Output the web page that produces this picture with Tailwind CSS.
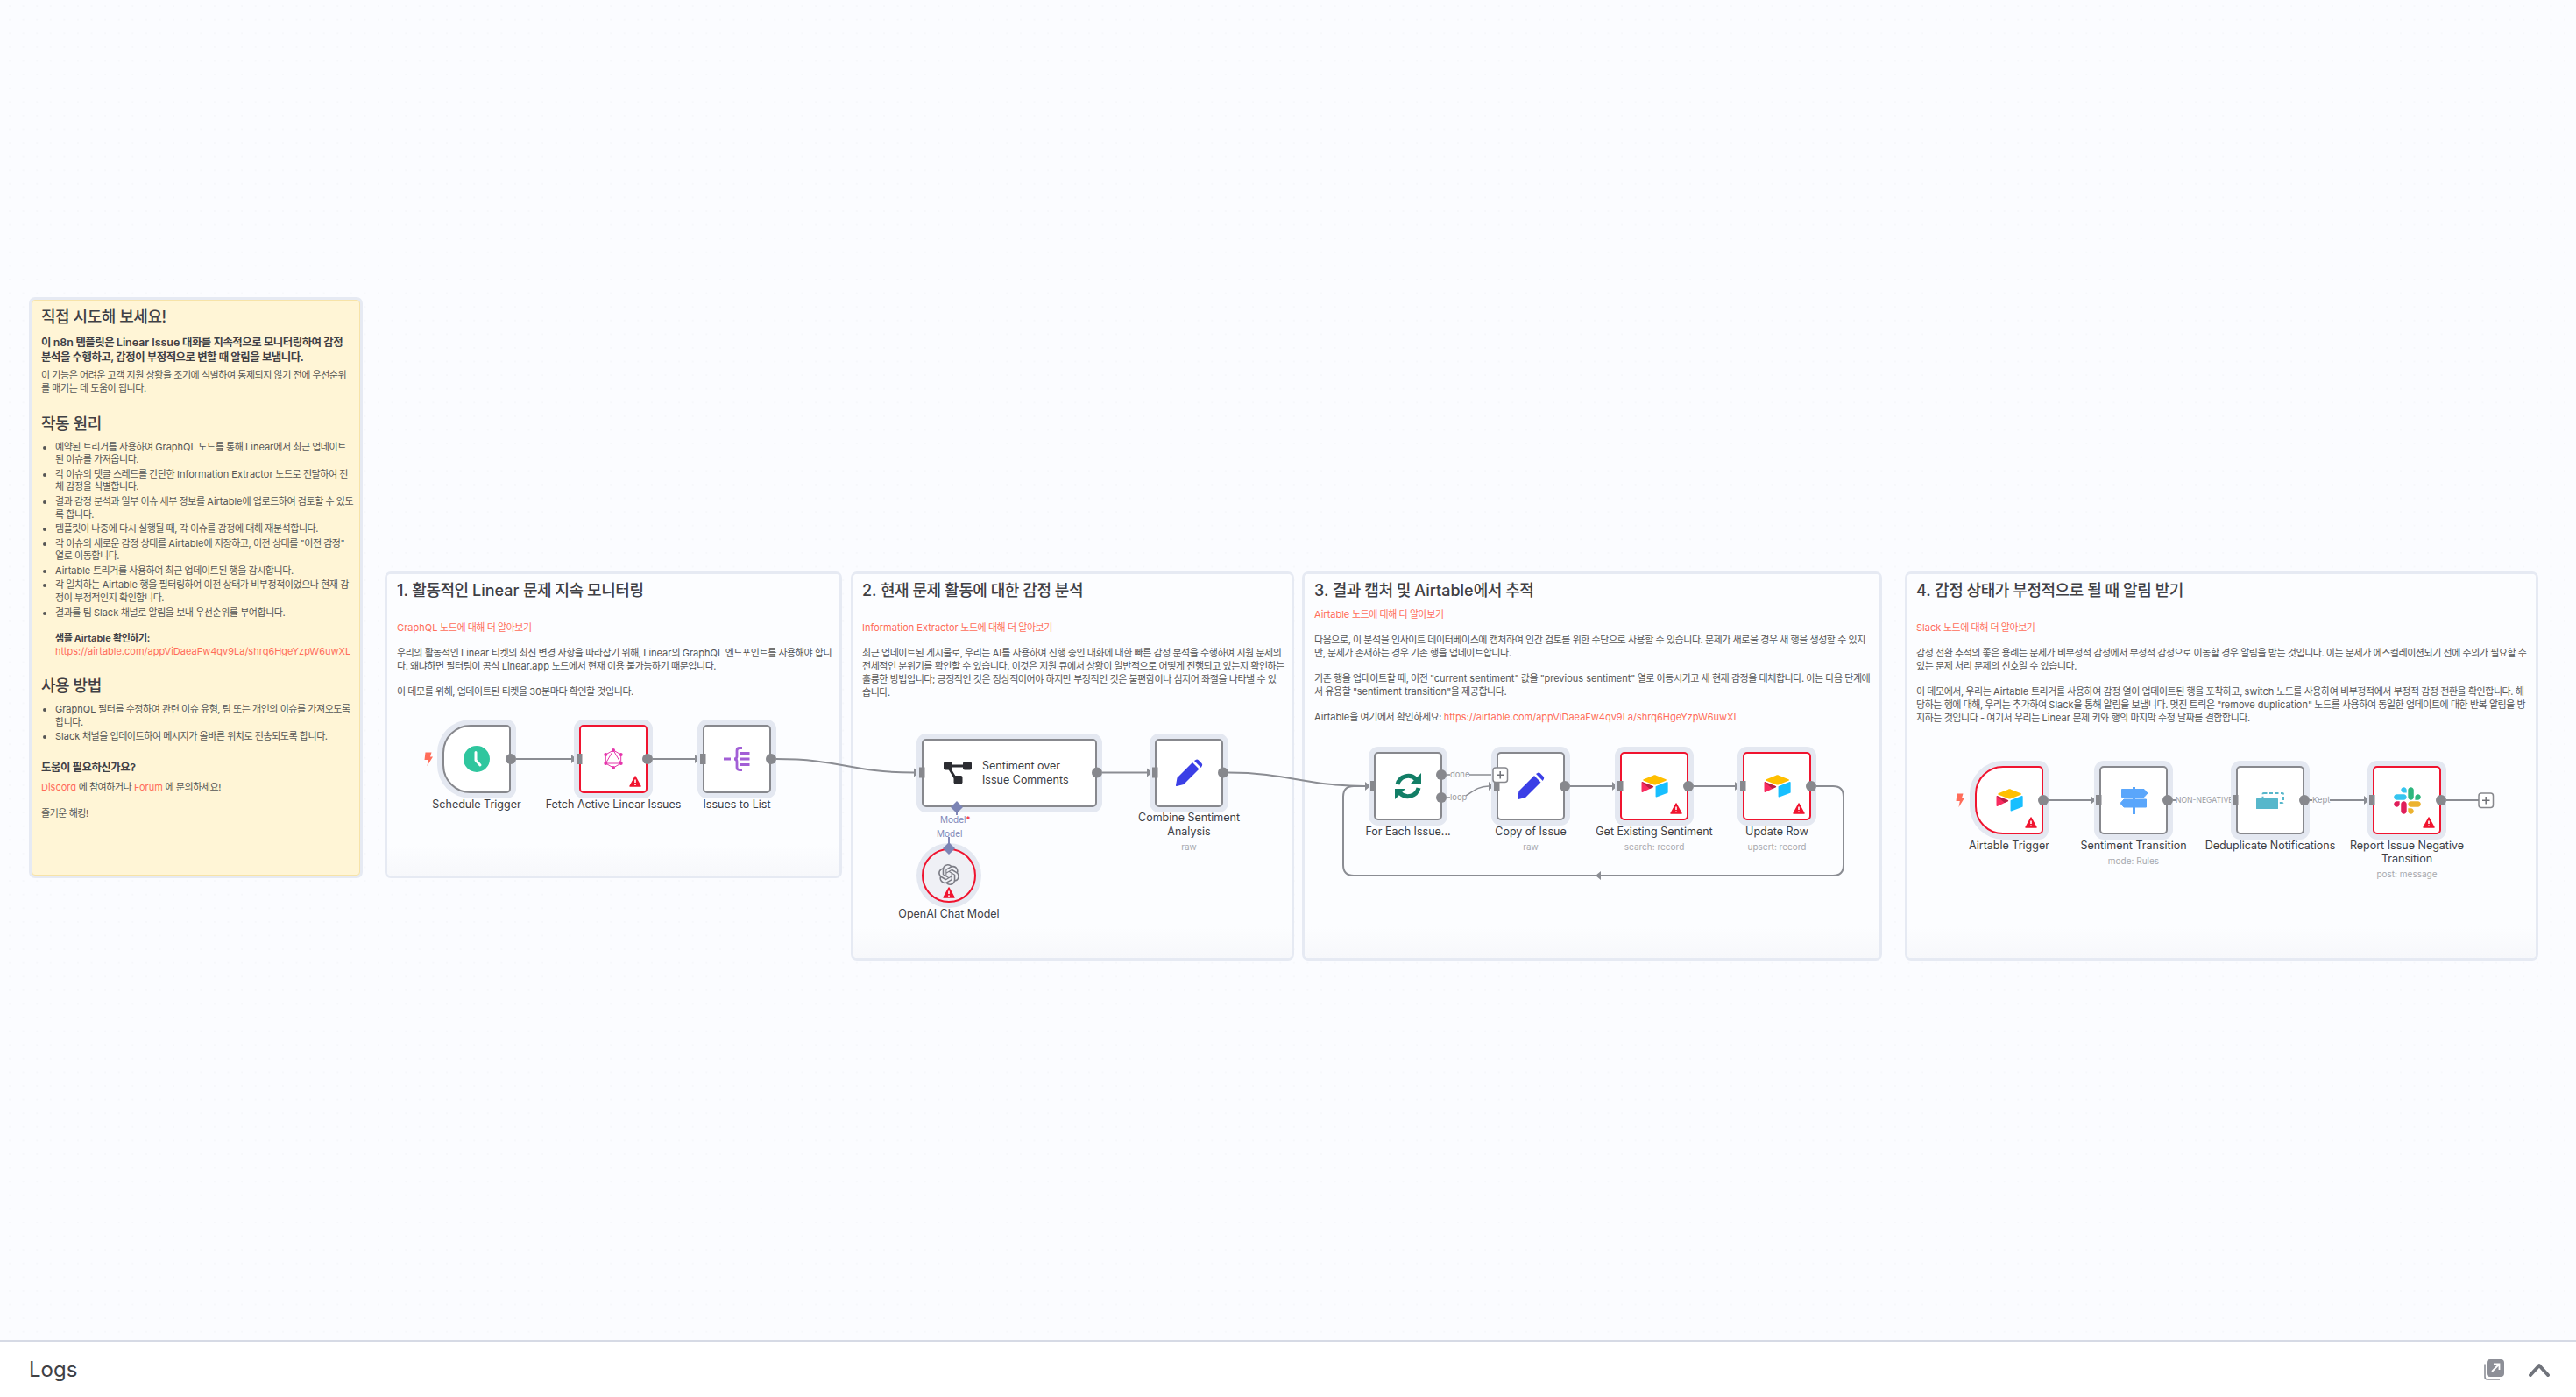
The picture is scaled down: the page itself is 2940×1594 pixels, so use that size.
<!DOCTYPE html>
<html lang="ko">
<head>
<meta charset="utf-8">
<title>Workflow</title>
<script src="https://cdn.jsdelivr.net/npm/@tailwindcss/browser@4"></script>
</head>
<body class="bg-white">
<div class="flex flex-col h-[1594px] w-[2940px] overflow-hidden font-['Inter','Noto_Sans_CJK_KR',sans-serif]">
  <main class="relative h-[1529px] overflow-hidden bg-[#fbfcff] [background-image:radial-gradient(#d4d6dd_0.6px,transparent_0.7px)] [background-size:15.6px_15.6px] [background-position:3.2px_-0.7px]">

    <!-- sticky intro -->
    <section class="absolute left-[36px] top-[342px] w-[375px] h-[657px] rounded-[4px] bg-[#fff5d6] border border-[#f7e3a8] shadow-[0_0_0_3px_#e6eaf3] pl-[10px] pr-[8px] pt-[7px] text-[#555] text-[11px] leading-[14.7px] tracking-[-0.45px]">
      <h2 class="text-[18px] leading-[24px] font-medium text-[#3f4045]">직접 시도해 보세요!</h2>
      <p class="mt-[7.5px] text-[12.4px] leading-[17px] font-semibold text-[#3f4045]">이 <span class="tracking-normal">n8n</span> 템플릿은 <span class="tracking-normal">Linear Issue</span> 대화를 지속적으로 모니터링하여 감정 분석을 수행하고, 감정이 부정적으로 변할 때 알림을 보냅니다.</p>
      <p class="mt-[5.5px] leading-[15.4px]">이 기능은 어려운 고객 지원 상황을 조기에 식별하여 통제되지 않기 전에 우선순위를 매기는 데 도움이 됩니다.</p>
      <h2 class="mt-[19.7px] text-[18px] leading-[24px] font-medium text-[#3f4045]">작동 원리</h2>
      <ul class="mt-[7px] pl-[16px] list-disc flex flex-col gap-[1.8px]">
        <li>예약된 트리거를 사용하여 <span class="tracking-normal">GraphQL</span> 노드를 통해 <span class="tracking-normal">Linear</span>에서 최근 업데이트된 이슈를 가져옵니다.</li>
        <li>각 이슈의 댓글 스레드를 간단한 <span class="tracking-normal">Information Extractor</span> 노드로 전달하여 전체 감정을 식별합니다.</li>
        <li class="-mr-[4px]">결과 감정 분석과 일부 이슈 세부 정보를 <span class="tracking-normal">Airtable</span>에 업로드하여 검토할 수 있도록 합니다.</li>
        <li>템플릿이 나중에 다시 실행될 때, 각 이슈를 감정에 대해 재분석합니다.</li>
        <li>각 이슈의 새로운 감정 상태를 <span class="tracking-normal">Airtable</span>에 저장하고, 이전 상태를 "이전 감정" 열로 이동합니다.</li>
        <li><span class="tracking-normal">Airtable</span> 트리거를 사용하여 최근 업데이트된 행을 감시합니다.</li>
        <li>각 일치하는 <span class="tracking-normal">Airtable</span> 행을 필터링하여 이전 상태가 비부정적이었으나 현재 감정이 부정적인지 확인합니다.</li>
        <li>결과를 팀 <span class="tracking-normal">Slack</span> 채널로 알림을 보내 우선순위를 부여합니다.</li>
      </ul>
      <p class="mt-[14.3px] pl-[16px] leading-[15px]"><strong class="font-semibold text-[#3f4045]">샘플 <span class="tracking-normal">Airtable</span> 확인하기:</strong><br><a class="text-[#ff6d5a] tracking-normal">https://airtable.com/appViDaeaFw4qv9La/shrq6HgeYzpW6uwXL</a></p>
      <h2 class="mt-[20.1px] text-[18px] leading-[24px] font-medium text-[#3f4045]">사용 방법</h2>
      <ul class="mt-[7.6px] pl-[16px] list-disc flex flex-col gap-[1.8px]">
        <li><span class="tracking-normal">GraphQL</span> 필터를 수정하여 관련 이슈 유형, 팀 또는 개인의 이슈를 가져오도록 합니다.</li>
        <li><span class="tracking-normal">Slack</span> 채널을 업데이트하여 메시지가 올바른 위치로 전송되도록 합니다.</li>
      </ul>
      <h3 class="mt-[19px] text-[12.4px] leading-[17px] font-semibold text-[#3f4045]">도움이 필요하신가요?</h3>
      <p class="mt-[7px]"><a class="text-[#ff6d5a] tracking-normal">Discord</a> 에 참여하거나 <a class="text-[#ff6d5a] tracking-normal">Forum</a> 에 문의하세요!</p>
      <p class="mt-[14.7px]">즐거운 해킹!</p>
    </section>

    <!-- section 1 -->
    <section class="absolute left-[442px] top-[655px] w-[516px] h-[344px] rounded-[4px] bg-linear-to-b from-[#fcfdff] from-[90%] to-[#f7f8fb] shadow-[0_0_0_3px_#e6eaf3] pl-[11px] pr-[8px] text-[#555] text-[11px] leading-[14.8px] tracking-[-0.45px]">
      <h2 class="pt-[7px] text-[18px] leading-[24px] font-medium text-[#3f4045]"><span class="tracking-normal">1.</span> 활동적인 <span class="tracking-normal">Linear</span> 문제 지속 모니터링</h2>
      <p class="mt-[23px] text-[#ff6d5a]"><span class="tracking-normal">GraphQL</span> 노드에 대해 더 알아보기</p>
      <p class="mt-[14.4px]">우리의 활동적인 <span class="tracking-normal">Linear</span> 티켓의 최신 변경 사항을 따라잡기 위해, <span class="tracking-normal">Linear</span>의 <span class="tracking-normal">GraphQL</span> 엔드포인트를 사용해야 합니다. 왜냐하면 필터링이 공식 <span class="tracking-normal">Linear.app</span> 노드에서 현재 이용 불가능하기 때문입니다.</p>
      <p class="mt-[14.4px]">이 데모를 위해, 업데이트된 티켓을 <span class="tracking-normal">30</span>분마다 확인할 것입니다.</p>
    </section>

    <!-- section 2 -->
    <section class="absolute left-[974px] top-[655px] w-[500px] h-[438px] rounded-[4px] bg-linear-to-b from-[#fcfdff] from-[92%] to-[#f7f8fb] shadow-[0_0_0_3px_#e6eaf3] pl-[10px] pr-[8px] text-[#555] text-[11px] leading-[14.8px] tracking-[-0.45px]">
      <h2 class="pt-[7px] text-[18px] leading-[24px] font-medium text-[#3f4045]"><span class="tracking-normal">2.</span> 현재 문제 활동에 대한 감정 분석</h2>
      <p class="mt-[23px] text-[#ff6d5a]"><span class="tracking-normal">Information Extractor</span> 노드에 대해 더 알아보기</p>
      <p class="mt-[14.4px]">최근 업데이트된 게시물로, 우리는 <span class="tracking-normal">AI</span>를 사용하여 진행 중인 대화에 대한 빠른 감정 분석을 수행하여 지원 문제의 전체적인 분위기를 확인할 수 있습니다. 이것은 지원 큐에서 상황이 일반적으로 어떻게 진행되고 있는지 확인하는 훌륭한 방법입니다; 긍정적인 것은 정상적이어야 하지만 부정적인 것은 불편함이나 심지어 좌절을 나타낼 수 있습니다.</p>
    </section>

    <!-- section 3 -->
    <section class="absolute left-[1489px] top-[655px] w-[656px] h-[438px] rounded-[4px] bg-linear-to-b from-[#fcfdff] from-[92%] to-[#f7f8fb] shadow-[0_0_0_3px_#e6eaf3] pl-[11px] pr-[8px] text-[#555] text-[11px] leading-[14.8px] tracking-[-0.45px]">
      <h2 class="pt-[7px] text-[18px] leading-[24px] font-medium text-[#3f4045]"><span class="tracking-normal">3.</span> 결과 캡처 및 <span class="tracking-normal">Airtable</span>에서 추적</h2>
      <p class="mt-[8px] text-[#ff6d5a]"><span class="tracking-normal">Airtable</span> 노드에 대해 더 알아보기</p>
      <p class="mt-[14.4px]">다음으로, 이 분석을 인사이트 데이터베이스에 캡처하여 인간 검토를 위한 수단으로 사용할 수 있습니다. 문제가 새로울 경우 새 행을 생성할 수 있지만, 문제가 존재하는 경우 기존 행을 업데이트합니다.</p>
      <p class="mt-[14.4px]">기존 행을 업데이트할 때, 이전 "<span class="tracking-normal">current sentiment</span>" 값을 "<span class="tracking-normal">previous sentiment</span>" 열로 이동시키고 새 현재 감정을 대체합니다. 이는 다음 단계에서 유용할 "<span class="tracking-normal">sentiment transition</span>"을 제공합니다.</p>
      <p class="mt-[14.4px]"><span class="tracking-normal">Airtable</span>을 여기에서 확인하세요: <a class="text-[#ff6d5a] tracking-normal">https://airtable.com/appViDaeaFw4qv9La/shrq6HgeYzpW6uwXL</a></p>
    </section>

    <!-- section 4 -->
    <section class="absolute left-[2177px] top-[655px] w-[717px] h-[438px] rounded-[4px] bg-linear-to-b from-[#fcfdff] from-[92%] to-[#f7f8fb] shadow-[0_0_0_3px_#e6eaf3] pl-[10px] pr-[8px] text-[#555] text-[11px] leading-[14.8px] tracking-[-0.45px]">
      <h2 class="pt-[7px] text-[18px] leading-[24px] font-medium text-[#3f4045]"><span class="tracking-normal">4.</span> 감정 상태가 부정적으로 될 때 알림 받기</h2>
      <p class="mt-[23px] text-[#ff6d5a]"><span class="tracking-normal">Slack</span> 노드에 대해 더 알아보기</p>
      <p class="mt-[14.4px]">감정 전환 추적의 좋은 용례는 문제가 비부정적 감정에서 부정적 감정으로 이동할 경우 알림을 받는 것입니다. 이는 문제가 에스컬레이션되기 전에 주의가 필요할 수 있는 문제 처리 문제의 신호일 수 있습니다.</p>
      <p class="mt-[14.4px]">이 데모에서, 우리는 <span class="tracking-normal">Airtable</span> 트리거를 사용하여 감정 열이 업데이트된 행을 포착하고, <span class="tracking-normal">switch</span> 노드를 사용하여 비부정적에서 부정적 감정 전환을 확인합니다. 해당하는 행에 대해, 우리는 추가하여 <span class="tracking-normal">Slack</span>을 통해 알림을 보냅니다. 멋진 트릭은 "<span class="tracking-normal">remove duplication</span>" 노드를 사용하여 동일한 업데이트에 대한 반복 알림을 방지하는 것입니다 - 여기서 우리는 <span class="tracking-normal">Linear</span> 문제 키와 행의 마지막 수정 날짜를 결합합니다.</p>
    </section>

    <!-- edges under the nodes -->
    <svg class="absolute left-0 top-0" width="2940" height="1529" fill="none" stroke="#8b8d93" stroke-width="2">
      <path d="M589 866H653M745 866H794"/>
      <path d="M886 866C960 866 970 881.5 1043 881.5"/>
      <path d="M1258 881.5H1309M1402 881.5C1470 881.5 1490 897 1558 897"/>
      <path d="M1792 897H1840M1933 897H1980"/>
      <path d="M2073 897H2092Q2104 897 2104 909V987Q2104 999 2092 999H1545Q1533 999 1533 987V909Q1533 897 1545 897H1558"/>
      <path d="M1651 884H1655M1651 910H1655M1677 884H1704" stroke-width="1.5"/>
      <path d="M1673 908C1682 902 1688 897 1699 897" stroke-width="1.5"/>
      <path d="M2338 913H2386M2480 913H2483M2636 913H2639M2659 913H2698M2792 913H2829" />
      <path d="M1083 955V968M1092 926V930" stroke="#8288b8"/>
      <g fill="#8b8d93" stroke="none">
        <path d="M652 861V871L658 866ZM793 861V871L799 866ZM1043 876.5V886.5L1049 881.5ZM1309 876.5V886.5L1315 881.5ZM1558 892V902L1564 897ZM1699 892V902L1705 897ZM1840 892V902L1846 897ZM1980 892V902L1986 897ZM2386 908V918L2392 913ZM2698 908V918L2704 913ZM1827 994V1004L1821 999Z"/>
      </g>
    </svg>

    <span class="absolute left-[2483px] top-[906px] whitespace-nowrap text-[8.6px] leading-[14px] text-[#9a9ba0]">NON-NEGATIVE</span>

    <!-- trigger bolts -->
    <svg class="absolute left-[484px] top-[858px]" width="10" height="16" viewBox="0 0 10 16"><path d="M1.5 0.5H8.5L7 5.5H10L3.5 16L4.8 9H0.5Z" fill="#ff6d5a"/></svg>
    <svg class="absolute left-[2232px] top-[905px]" width="10" height="16" viewBox="0 0 10 16"><path d="M1.5 0.5H8.5L7 5.5H10L3.5 16L4.8 9H0.5Z" fill="#ff6d5a"/></svg>

    <!-- Schedule Trigger -->
    <div class="absolute left-[505px] top-[827px] w-[78px] h-[78px] flex items-center justify-center bg-white border-2 border-[#87888d] rounded-l-[32px] rounded-r-[5px] shadow-[0_0_0_6px_#e4e8f1]">
      <svg width="30" height="30" viewBox="0 0 30 30"><circle cx="15" cy="15" r="15" fill="#2fc69e"/><path d="M14 7.5V16.5L19 22" fill="none" stroke="#fff" stroke-width="3" stroke-linecap="round" stroke-linejoin="round"/></svg>
      <span class="absolute top-[calc(100%+7px)] left-1/2 -translate-x-1/2 w-[170px] text-center text-[12.5px] leading-[15px] text-[#3d3e44]">Schedule Trigger</span>
    </div>

    <!-- Fetch Active Linear Issues -->
    <div class="absolute left-[661px] top-[827px] w-[78px] h-[78px] flex items-center justify-center bg-white border-2 border-[#f0142f] rounded-[5px] shadow-[0_0_0_6px_#e4e8f1]">
      <svg width="24" height="24" viewBox="0 0 24 24" fill="none" stroke="#e535ab" stroke-width="1"><path d="M12 2L20.7 7V17L12 22L3.3 17V7ZM12 2L20.7 17H3.3Z"/><g fill="#e535ab" stroke="none"><circle cx="12" cy="2" r="2"/><circle cx="20.7" cy="7" r="2"/><circle cx="20.7" cy="17" r="2"/><circle cx="12" cy="22" r="2"/><circle cx="3.3" cy="17" r="2"/><circle cx="3.3" cy="7" r="2"/></g></svg>
      <svg class="absolute right-[5px] bottom-[5px]" width="14" height="13" viewBox="0 0 14 13"><path d="M7 1L13 12H1Z" fill="#f0142f" stroke="#f0142f" stroke-width="1.5" stroke-linejoin="round"/><path d="M7 4.5V8M7 9.5V11" stroke="#fff" stroke-width="1.6"/></svg>
      <span class="absolute top-[calc(100%+7px)] left-1/2 -translate-x-1/2 w-[190px] text-center text-[12.5px] leading-[15px] text-[#3d3e44]">Fetch Active Linear Issues</span>
    </div>

    <!-- Issues to List -->
    <div class="absolute left-[802px] top-[827px] w-[78px] h-[78px] flex items-center justify-center bg-white border-2 border-[#87888d] rounded-[5px] shadow-[0_0_0_6px_#e4e8f1]">
      <svg width="30" height="28" viewBox="0 0 30 28" fill="none" stroke="#a25fd6" stroke-width="2.8"><path d="M0 14H8M21 1.5H18Q15 1.5 15 4.5V11Q15 14 12 14Q15 14 15 17V23.5Q15 26.5 18 26.5H21M19 7.5H29.5M19 14H29.5M19 20.5H29.5"/></svg>
      <span class="absolute top-[calc(100%+7px)] left-1/2 -translate-x-1/2 w-[170px] text-center text-[12.5px] leading-[15px] text-[#3d3e44]">Issues to List</span>
    </div>

    <!-- Sentiment over Issue Comments -->
    <div class="absolute left-[1052px] top-[843px] w-[200px] h-[78px] flex items-center gap-[12px] pl-[23px] bg-white border-2 border-[#87888d] rounded-[5px] shadow-[0_0_0_6px_#e4e8f1]">
      <svg class="shrink-0" width="32" height="26" viewBox="0 0 32 26"><path d="M9 5H23M6 7L14 20" stroke="#2b2c31" stroke-width="3"/><rect x="0" y="0" width="10" height="9.5" rx="2" fill="#2b2c31"/><rect x="22" y="0" width="10" height="9.5" rx="2" fill="#2b2c31"/><rect x="11.5" y="16" width="10" height="9.5" rx="2" fill="#2b2c31"/></svg>
      <span class="text-[12.5px] leading-[16px] text-[#3d3e44]">Sentiment over<br>Issue Comments</span>
    </div>

    <!-- Combine Sentiment Analysis -->
    <div class="absolute left-[1318px] top-[843px] w-[78px] h-[78px] flex items-center justify-center bg-white border-2 border-[#87888d] rounded-[5px] shadow-[0_0_0_6px_#e4e8f1]">
      <svg width="32" height="32" viewBox="0 0 32 32" fill="#3b3fe6"><path d="M2.5 21.5L20 4L27.5 11.5L10 29L2 31Q0.8 31.3 1 30Z"/><path d="M22 2L24.2 0.8Q25.6 0.2 26.8 1.2L30.5 5Q31.6 6.2 31 7.6L29.8 10Z"/></svg>
      <div class="absolute top-[calc(100%+6px)] left-1/2 -translate-x-1/2 w-[170px] text-center">
        <p class="text-[12.5px] leading-[15.5px] text-[#3d3e44]">Combine Sentiment<br>Analysis</p>
        <p class="mt-[3px] text-[10px] leading-[14px] text-[#a8a9ae]">raw</p>
      </div>
    </div>

    <!-- OpenAI Chat Model -->
    <div class="absolute left-[1052px] top-[968px] w-[62px] h-[62px] flex items-center justify-center bg-[#eff0f5] border-2 border-[#f0142f] rounded-full shadow-[0_0_0_6px_#e4e8f1]">
      <svg class="-mt-[3px]" width="24" height="24" viewBox="0 0 24 24" fill="#7b7c85"><path d="M22.2819 9.8211a5.9847 5.9847 0 0 0-.5157-4.9108 6.0462 6.0462 0 0 0-6.5098-2.9A6.0651 6.0651 0 0 0 4.9807 4.1818a5.9847 5.9847 0 0 0-3.9977 2.9 6.0462 6.0462 0 0 0 .7427 7.0966 5.98 5.98 0 0 0 .511 4.9107 6.051 6.051 0 0 0 6.5146 2.9001A5.9847 5.9847 0 0 0 13.2599 24a6.0557 6.0557 0 0 0 5.7718-4.2058 5.9894 5.9894 0 0 0 3.9977-2.9001 6.0557 6.0557 0 0 0-.7475-7.0729zm-9.022 12.6081a4.4755 4.4755 0 0 1-2.8764-1.0408l.1419-.0804 4.7783-2.7582a.7948.7948 0 0 0 .3927-.6813v-6.7369l2.02 1.1686a.071.071 0 0 1 .038.052v5.5826a4.504 4.504 0 0 1-4.4945 4.4944zm-9.6607-4.1254a4.4708 4.4708 0 0 1-.5346-3.0137l.142.0852 4.783 2.7582a.7712.7712 0 0 0 .7806 0l5.8428-3.3685v2.3324a.0804.0804 0 0 1-.0332.0615L9.74 19.9502a4.4992 4.4992 0 0 1-6.1408-1.6464zM2.3408 7.8956a4.485 4.485 0 0 1 2.3655-1.9728V11.6a.7664.7664 0 0 0 .3879.6765l5.8144 3.3543-2.0201 1.1685a.0757.0757 0 0 1-.071 0l-4.8303-2.7865A4.504 4.504 0 0 1 2.3408 7.872zm16.5963 3.8558L13.1038 8.364 15.1192 7.2a.0757.0757 0 0 1 .071 0l4.8303 2.7913a4.4944 4.4944 0 0 1-.6765 8.1042v-5.6772a.79.79 0 0 0-.407-.667zm2.0107-3.0231l-.142-.0852-4.7735-2.7818a.7759.7759 0 0 0-.7854 0L9.409 9.2297V6.8974a.0662.0662 0 0 1 .0284-.0615l4.8303-2.7866a4.4992 4.4992 0 0 1 6.6802 4.66zM8.3065 12.863l-2.02-1.1638a.0804.0804 0 0 1-.038-.0567V6.0742a4.4992 4.4992 0 0 1 7.3757-3.4537l-.142.0805L8.704 5.459a.7948.7948 0 0 0-.3927.6813zm1.0976-2.3654l2.602-1.4998 2.6069 1.4998v2.9994l-2.5974 1.4997-2.6067-1.4997Z"/></svg>
      <svg class="absolute left-[22px] bottom-[3px]" width="14" height="13" viewBox="0 0 14 13"><path d="M7 1L13 12H1Z" fill="#f0142f" stroke="#f0142f" stroke-width="1.5" stroke-linejoin="round"/><path d="M7 4.5V8M7 9.5V11" stroke="#fff" stroke-width="1.6"/></svg>
      <span class="absolute top-[calc(100%+7px)] left-1/2 -translate-x-1/2 w-[170px] text-center text-[12.5px] leading-[15px] text-[#3d3e44]">OpenAI Chat Model</span>
    </div>

    <!-- For Each Issue -->
    <div class="absolute left-[1568px] top-[858px] w-[78px] h-[78px] flex items-center justify-center bg-white border-2 border-[#87888d] rounded-[5px] shadow-[0_0_0_6px_#e4e8f1]">
      <svg width="32" height="32" viewBox="0 0 32 32" fill="none" stroke="#127e66" stroke-width="5"><path d="M4 14A12.5 12.5 0 0 1 25 8"/><path d="M28 18A12.5 12.5 0 0 1 7 24"/><path d="M31 1V13H19ZM1 31V19H13Z" fill="#127e66" stroke="none"/></svg>
      <span class="absolute top-[calc(100%+7px)] left-1/2 -translate-x-1/2 w-[170px] text-center text-[12.5px] leading-[15px] text-[#3d3e44]">For Each Issue...</span>
    </div>

    <!-- Copy of Issue -->
    <div class="absolute left-[1708px] top-[858px] w-[78px] h-[78px] flex items-center justify-center bg-white border-2 border-[#87888d] rounded-[5px] shadow-[0_0_0_6px_#e4e8f1]">
      <svg width="32" height="32" viewBox="0 0 32 32" fill="#3b3fe6"><path d="M2.5 21.5L20 4L27.5 11.5L10 29L2 31Q0.8 31.3 1 30Z"/><path d="M22 2L24.2 0.8Q25.6 0.2 26.8 1.2L30.5 5Q31.6 6.2 31 7.6L29.8 10Z"/></svg>
      <div class="absolute top-[calc(100%+7px)] left-1/2 -translate-x-1/2 w-[170px] text-center">
        <p class="text-[12.5px] leading-[15px] text-[#3d3e44]">Copy of Issue</p>
        <p class="mt-[3px] text-[10px] leading-[14px] text-[#a8a9ae]">raw</p>
      </div>
    </div>

    <!-- Get Existing Sentiment -->
    <div class="absolute left-[1849px] top-[858px] w-[78px] h-[78px] flex items-center justify-center bg-white border-2 border-[#f0142f] rounded-[5px] shadow-[0_0_0_6px_#e4e8f1]">
      <svg width="31" height="26" viewBox="0 0 200 170"><path fill="#FFBF00" d="M90 4.5L16.6 34.9c-4.1 1.7-4 7.5.1 9.2l73.8 29.3c6.5 2.6 13.7 2.6 20.2 0l73.8-29.3c4.1-1.6 4.2-7.4.1-9.2L111 4.5c-6.7-2.8-14.3-2.8-21 0z"/><path fill="#18BFFF" d="M107 89.3v73.1c0 3.5 3.5 5.9 6.8 4.6l82.2-32c1.9-.7 3.1-2.6 3.1-4.6V57.4c0-3.5-3.5-5.9-6.8-4.6l-82.2 32c-1.9.7-3.1 2.5-3.1 4.5z"/><path fill="#F82B60" d="M87.8 93.1l-24.4 11.8-2.5 1.2L9.4 130.8c-3.3 1.6-7.4-.8-7.4-4.4V57.8c0-1.3.7-2.4 1.6-3.3.4-.4.8-.7 1.2-.9 1.2-.7 3-.9 4.4-.3L88 84.4c4.1 1.6 4.4 7 .3 8.7z"/><path fill="#BA1E45" d="M87.8 93.1l-24.6 11.9L3.6 54.5c.4-.4.8-.7 1.2-.9 1.2-.7 3-.9 4.4-.3L88 84.4c4.1 1.6 4.4 7-.2 8.7z"/></svg>
      <svg class="absolute right-[5px] bottom-[5px]" width="14" height="13" viewBox="0 0 14 13"><path d="M7 1L13 12H1Z" fill="#f0142f" stroke="#f0142f" stroke-width="1.5" stroke-linejoin="round"/><path d="M7 4.5V8M7 9.5V11" stroke="#fff" stroke-width="1.6"/></svg>
      <div class="absolute top-[calc(100%+7px)] left-1/2 -translate-x-1/2 w-[170px] text-center">
        <p class="text-[12.5px] leading-[15px] text-[#3d3e44]">Get Existing Sentiment</p>
        <p class="mt-[3px] text-[10px] leading-[14px] text-[#a8a9ae]">search: record</p>
      </div>
    </div>

    <!-- Update Row -->
    <div class="absolute left-[1989px] top-[858px] w-[78px] h-[78px] flex items-center justify-center bg-white border-2 border-[#f0142f] rounded-[5px] shadow-[0_0_0_6px_#e4e8f1]">
      <svg width="31" height="26" viewBox="0 0 200 170"><path fill="#FFBF00" d="M90 4.5L16.6 34.9c-4.1 1.7-4 7.5.1 9.2l73.8 29.3c6.5 2.6 13.7 2.6 20.2 0l73.8-29.3c4.1-1.6 4.2-7.4.1-9.2L111 4.5c-6.7-2.8-14.3-2.8-21 0z"/><path fill="#18BFFF" d="M107 89.3v73.1c0 3.5 3.5 5.9 6.8 4.6l82.2-32c1.9-.7 3.1-2.6 3.1-4.6V57.4c0-3.5-3.5-5.9-6.8-4.6l-82.2 32c-1.9.7-3.1 2.5-3.1 4.5z"/><path fill="#F82B60" d="M87.8 93.1l-24.4 11.8-2.5 1.2L9.4 130.8c-3.3 1.6-7.4-.8-7.4-4.4V57.8c0-1.3.7-2.4 1.6-3.3.4-.4.8-.7 1.2-.9 1.2-.7 3-.9 4.4-.3L88 84.4c4.1 1.6 4.4 7 .3 8.7z"/><path fill="#BA1E45" d="M87.8 93.1l-24.6 11.9L3.6 54.5c.4-.4.8-.7 1.2-.9 1.2-.7 3-.9 4.4-.3L88 84.4c4.1 1.6 4.4 7-.2 8.7z"/></svg>
      <svg class="absolute right-[5px] bottom-[5px]" width="14" height="13" viewBox="0 0 14 13"><path d="M7 1L13 12H1Z" fill="#f0142f" stroke="#f0142f" stroke-width="1.5" stroke-linejoin="round"/><path d="M7 4.5V8M7 9.5V11" stroke="#fff" stroke-width="1.6"/></svg>
      <div class="absolute top-[calc(100%+7px)] left-1/2 -translate-x-1/2 w-[170px] text-center">
        <p class="text-[12.5px] leading-[15px] text-[#3d3e44]">Update Row</p>
        <p class="mt-[3px] text-[10px] leading-[14px] text-[#a8a9ae]">upsert: record</p>
      </div>
    </div>

    <!-- Airtable Trigger -->
    <div class="absolute left-[2254px] top-[874px] w-[78px] h-[78px] flex items-center justify-center bg-white border-2 border-[#f0142f] rounded-l-[32px] rounded-r-[5px] shadow-[0_0_0_6px_#e4e8f1]">
      <svg width="31" height="26" viewBox="0 0 200 170"><path fill="#FFBF00" d="M90 4.5L16.6 34.9c-4.1 1.7-4 7.5.1 9.2l73.8 29.3c6.5 2.6 13.7 2.6 20.2 0l73.8-29.3c4.1-1.6 4.2-7.4.1-9.2L111 4.5c-6.7-2.8-14.3-2.8-21 0z"/><path fill="#18BFFF" d="M107 89.3v73.1c0 3.5 3.5 5.9 6.8 4.6l82.2-32c1.9-.7 3.1-2.6 3.1-4.6V57.4c0-3.5-3.5-5.9-6.8-4.6l-82.2 32c-1.9.7-3.1 2.5-3.1 4.5z"/><path fill="#F82B60" d="M87.8 93.1l-24.4 11.8-2.5 1.2L9.4 130.8c-3.3 1.6-7.4-.8-7.4-4.4V57.8c0-1.3.7-2.4 1.6-3.3.4-.4.8-.7 1.2-.9 1.2-.7 3-.9 4.4-.3L88 84.4c4.1 1.6 4.4 7 .3 8.7z"/><path fill="#BA1E45" d="M87.8 93.1l-24.6 11.9L3.6 54.5c.4-.4.8-.7 1.2-.9 1.2-.7 3-.9 4.4-.3L88 84.4c4.1 1.6 4.4 7-.2 8.7z"/></svg>
      <svg class="absolute right-[5px] bottom-[5px]" width="14" height="13" viewBox="0 0 14 13"><path d="M7 1L13 12H1Z" fill="#f0142f" stroke="#f0142f" stroke-width="1.5" stroke-linejoin="round"/><path d="M7 4.5V8M7 9.5V11" stroke="#fff" stroke-width="1.6"/></svg>
      <span class="absolute top-[calc(100%+7px)] left-1/2 -translate-x-1/2 w-[170px] text-center text-[12.5px] leading-[15px] text-[#3d3e44]">Airtable Trigger</span>
    </div>

    <!-- Sentiment Transition -->
    <div class="absolute left-[2396px] top-[874px] w-[78px] h-[78px] flex items-center justify-center bg-white border-2 border-[#87888d] rounded-[5px] shadow-[0_0_0_6px_#e4e8f1]">
      <svg width="31" height="31" viewBox="0 0 31 31" fill="#5aa6fb"><path d="M14 0H17V3H14ZM14 12H17V14H14ZM14 23H17V31H14Z"/><path d="M1.5 2.5H27L31 7L27 11.5H1.5Z" stroke="#5aa6fb" stroke-linejoin="round"/><path d="M29.5 14H4L0 18.5L4 23H29.5Z" stroke="#5aa6fb" stroke-linejoin="round"/></svg>
      <div class="absolute top-[calc(100%+7px)] left-1/2 -translate-x-1/2 w-[170px] text-center">
        <p class="text-[12.5px] leading-[15px] text-[#3d3e44]">Sentiment Transition</p>
        <p class="mt-[3px] text-[10px] leading-[14px] text-[#a8a9ae]">mode: Rules</p>
      </div>
    </div>

    <!-- Deduplicate Notifications -->
    <div class="absolute left-[2552px] top-[874px] w-[78px] h-[78px] flex items-center justify-center bg-white border-2 border-[#87888d] rounded-[5px] shadow-[0_0_0_6px_#e4e8f1]">
      <svg width="32" height="19" viewBox="0 0 32 19"><rect x="7.5" y="1" width="23.5" height="11" rx="1" fill="none" stroke="#57b7cb" stroke-width="2" stroke-dasharray="4 2.5"/><rect x="0" y="7" width="25" height="12" rx="0.5" fill="#57b7cb"/></svg>
      <span class="absolute top-[calc(100%+7px)] left-1/2 -translate-x-1/2 w-[170px] text-center text-[12.5px] leading-[15px] text-[#3d3e44]">Deduplicate Notifications</span>
    </div>

    <!-- Report Issue Negative Transition -->
    <div class="absolute left-[2708px] top-[874px] w-[78px] h-[78px] flex items-center justify-center bg-white border-2 border-[#f0142f] rounded-[5px] shadow-[0_0_0_6px_#e4e8f1]">
      <svg width="31" height="31" viewBox="0 0 127 127"><path d="M27.2 80c0 7.3-5.9 13.2-13.2 13.2C6.7 93.2.8 87.3.8 80c0-7.3 5.9-13.2 13.2-13.2h13.2V80zm6.6 0c0-7.3 5.9-13.2 13.2-13.2 7.3 0 13.2 5.9 13.2 13.2v33c0 7.3-5.9 13.2-13.2 13.2-7.3 0-13.2-5.9-13.2-13.2V80z" fill="#E01E5A"/><path d="M47 27c-7.3 0-13.2-5.9-13.2-13.2C33.8 6.5 39.7.6 47 .6c7.3 0 13.2 5.9 13.2 13.2V27H47zm0 6.7c7.3 0 13.2 5.9 13.2 13.2 0 7.3-5.9 13.2-13.2 13.2H13.9C6.6 60.1.7 54.2.7 46.9c0-7.3 5.9-13.2 13.2-13.2H47z" fill="#36C5F0"/><path d="M99.9 46.9c0-7.3 5.9-13.2 13.2-13.2 7.3 0 13.2 5.9 13.2 13.2 0 7.3-5.9 13.2-13.2 13.2H99.9V46.9zm-6.6 0c0 7.3-5.9 13.2-13.2 13.2-7.3 0-13.2-5.9-13.2-13.2V13.8C66.9 6.5 72.8.6 80.1.6c7.3 0 13.2 5.9 13.2 13.2v33.1z" fill="#2EB67D"/><path d="M80.1 99.8c7.3 0 13.2 5.9 13.2 13.2 0 7.3-5.9 13.2-13.2 13.2-7.3 0-13.2-5.9-13.2-13.2V99.8h13.2zm0-6.6c-7.3 0-13.2-5.9-13.2-13.2 0-7.3 5.9-13.2 13.2-13.2h33.1c7.3 0 13.2 5.9 13.2 13.2 0 7.3-5.9 13.2-13.2 13.2H80.1z" fill="#ECB22E"/></svg>
      <svg class="absolute right-[5px] bottom-[5px]" width="14" height="13" viewBox="0 0 14 13"><path d="M7 1L13 12H1Z" fill="#f0142f" stroke="#f0142f" stroke-width="1.5" stroke-linejoin="round"/><path d="M7 4.5V8M7 9.5V11" stroke="#fff" stroke-width="1.6"/></svg>
      <div class="absolute top-[calc(100%+7px)] left-1/2 -translate-x-1/2 w-[170px] text-center">
        <p class="text-[12.5px] leading-[15px] text-[#3d3e44]">Report Issue Negative<br>Transition</p>
        <p class="mt-[3px] text-[10px] leading-[14px] text-[#a8a9ae]">post: message</p>
      </div>
    </div>

    <!-- ports and connector labels over the nodes -->
    <svg class="absolute left-0 top-0" width="2940" height="1529">
      <g fill="#87888d">
        <circle cx="583" cy="866" r="6"/><circle cx="739" cy="866" r="6"/><circle cx="880" cy="866" r="6"/>
        <circle cx="1252" cy="881.5" r="6"/><circle cx="1396" cy="881.5" r="6"/>
        <circle cx="1645" cy="884" r="6"/><circle cx="1645" cy="910" r="6"/><circle cx="1786" cy="897" r="6"/><circle cx="1927" cy="897" r="6"/><circle cx="2067" cy="897" r="6"/>
        <circle cx="2332" cy="913" r="6"/><circle cx="2474" cy="913" r="6"/><circle cx="2630" cy="913" r="6"/><circle cx="2786" cy="913" r="6"/>
        <rect x="658" y="860" width="6.5" height="12"/><rect x="799" y="860" width="6.5" height="12"/>
        <rect x="1049" y="875.5" width="6.5" height="12"/><rect x="1315" y="875.5" width="6.5" height="12"/>
        <rect x="1564" y="891" width="6.5" height="12"/><rect x="1705" y="891" width="6.5" height="12"/><rect x="1846" y="891" width="6.5" height="12"/><rect x="1986" y="891" width="6.5" height="12"/>
        <rect x="2392" y="907" width="6.5" height="12"/><rect x="2548" y="907" width="6.5" height="12"/><rect x="2704" y="907" width="6.5" height="12"/>
      </g>
      <path d="M1092 914L1099 921L1092 928L1085 921ZM1083 961L1090 968L1083 975L1076 968Z" fill="#7c84b4"/>
      <rect x="1704" y="876" width="16.5" height="16.5" rx="3" fill="#fff" stroke="#87888d" stroke-width="1.5"/>
      <path d="M1712.2 880V888.5M1708 884.2H1716.5" stroke="#6f7076" stroke-width="1.5"/>
      <rect x="2829" y="905" width="16.5" height="16.5" rx="3" fill="#fff" stroke="#87888d" stroke-width="1.5"/>
      <path d="M2837.2 909V917.5M2833 913.2H2841.5" stroke="#6f7076" stroke-width="1.5"/>
    </svg>

    <span class="absolute left-[1655px] top-[877px] text-[9.4px] leading-[14px] text-[#9a9ba0]">done</span>
    <span class="absolute left-[1655px] top-[903px] text-[9.4px] leading-[14px] text-[#9a9ba0]">loop</span>
    <span class="absolute left-[2639px] top-[906px] text-[9.4px] leading-[14px] text-[#9a9ba0]">Kept</span>
    <span class="absolute left-[1073px] top-[928px] text-[10px] leading-[14px] text-[#8288b8]">Model<span class="text-[#f0142f]">*</span></span>
    <span class="absolute left-[1069px] top-[944px] text-[10px] leading-[14px] text-[#8288b8]">Model</span>
  </main>

  <footer class="flex-1 flex items-center justify-between bg-white border-t-2 border-[#d6dae5] pl-[33px] pr-[30px]">
    <span class="text-[24px] leading-[30px] text-[#404145]">Logs</span>
    <div class="flex items-center gap-[28px]">
      <svg width="24" height="24" viewBox="0 0 24 24" fill="none"><path d="M2 5.5V20Q2 23 5 23H19" stroke="#8d8f97" stroke-width="1.6"/><rect x="4" y="0" width="20" height="20" rx="4" fill="#8d8f97"/><path d="M10 14L18 6M12 5.5H18.5V12" stroke="#fff" stroke-width="1.8"/></svg>
      <svg width="24" height="16" viewBox="0 0 24 16" fill="none"><path d="M2 14L12 3L22 14" stroke="#70737b" stroke-width="4" stroke-linecap="round" stroke-linejoin="round"/></svg>
    </div>
  </footer>
</div>
</body>
</html>
